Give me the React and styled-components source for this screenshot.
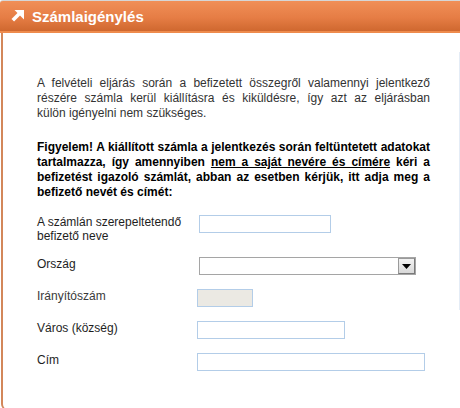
import React from "react";
import styled, { createGlobalStyle } from "styled-components";

const GlobalStyle = createGlobalStyle`
  body {
    margin: 0;
    background: #fff;
    font-family: "Liberation Sans", Arial, sans-serif;
  }
`;

const Page = styled.div`
  position: relative;
  width: 460px;
  height: 408px;
  overflow: hidden;
  background: #fff;
`;

const Header = styled.div`
  height: 30px;
  border-top: 1px solid #d6d6d6;
  border-bottom: 2px solid #ee8b4d;
  background: linear-gradient(to bottom, #f08f57 0%, #e67d45 55%, #cf682f 100%);
  border-top-left-radius: 3px;
  display: flex;
  align-items: center;
  padding-left: 11px;
  gap: 8px;
`;

const Title = styled.div`
  color: #fff;
  font-weight: bold;
  font-size: 15px;
  line-height: 30px;
  padding-top: 1px;
`;

const Panel = styled.div`
  box-sizing: border-box;
  height: 377px;
  margin-left: 1px;
  border-left: 2px solid #d3875a;
  border-bottom: 1px solid #d3875a;
  border-bottom-left-radius: 6px;
  padding: 43px 0 0 34px;
`;

const Column = styled.div`
  width: 393px;
`;

const Text = styled.div`
  margin: 0 0 ${({ $gap }) => $gap}px;
  font-size: 12px;
  line-height: 15px;
  color: ${({ $strong }) => ($strong ? "#000" : "#333")};
  font-weight: ${({ $strong }) => ($strong ? "bold" : "normal")};
`;

const Line = styled.span`
  display: block;
  height: 15px;
  white-space: nowrap;
  text-align: ${({ $last }) => ($last ? "left" : "justify")};
  text-align-last: ${({ $last }) => ($last ? "left" : "justify")};
`;

const Under = styled.span`
  text-decoration: underline;
`;

const Form = styled.div`
  display: flex;
  flex-direction: column;
  gap: 14px;
`;

const Row = styled.div`
  display: flex;
  align-items: flex-start;
`;

const Label = styled.div`
  width: 160px;
  flex: none;
  font-size: 12px;
  line-height: 14px;
  color: ${({ $muted }) => ($muted ? "#3a3a3a" : "#1e1e1e")};
`;

const Input = styled.div`
  box-sizing: border-box;
  width: ${({ $w }) => $w}px;
  height: 18px;
  margin-left: ${({ $shift }) => $shift || 0}px;
  border: 1px solid #b3cde8;
  background: ${({ $disabled }) => ($disabled ? "#ebe9e3" : "#fff")};
`;

const Select = styled.div`
  box-sizing: border-box;
  width: 217px;
  height: 18px;
  margin-left: 2px;
  border: 1px solid #a5a5a5;
  background: #fff;
  display: flex;
  justify-content: flex-end;
`;

const DropButton = styled.div`
  box-sizing: border-box;
  width: 17px;
  height: 16px;
  border: 1px solid #7a7a7a;
  border-top-color: #9a9a9a;
  border-left-color: #9a9a9a;
  background: linear-gradient(to bottom, #f2f2f2, #d8d8d8);
  display: flex;
  align-items: center;
  justify-content: center;
  padding-top: 2px;
`;

const EdgeLine = styled.div`
  position: absolute;
  left: 459px;
  top: 52px;
  width: 1px;
  height: 258px;
  background: #e4ecf6;
`;

function ArrowIcon() {
  return (
    <svg width="13" height="12" viewBox="0 0 13 12">
      <polygon points="3.5,0 13,0 13,9.5" fill="#fff" />
      <line x1="1.8" y1="10.2" x2="9" y2="3" stroke="#fff" strokeWidth="3.6" />
    </svg>
  );
}

function Caret() {
  return (
    <svg width="9" height="6" viewBox="0 0 9 6">
      <polygon points="0,0 9,0 4.5,5" fill="#000" />
    </svg>
  );
}

export default function App() {
  return (
    <Page>
      <GlobalStyle />
      <Header>
        <ArrowIcon />
        <Title>Számlaigénylés</Title>
      </Header>
      <Panel>
        <Column>
          <Text $gap={19}>
            <Line>A felvételi eljárás során a befizetett összegről valamennyi jelentkező</Line>
            <Line>részére számla kerül kiállításra és kiküldésre, így azt az eljárásban</Line>
            <Line $last>külön igényelni nem szükséges.</Line>
          </Text>
          <Text $strong $gap={15}>
            <Line>Figyelem! A kiállított számla a jelentkezés során feltüntetett adatokat</Line>
            <Line>
              tartalmazza, így amennyiben <Under>nem a saját nevére és címére</Under> kéri a
            </Line>
            <Line>befizetést igazoló számlát, abban az esetben kérjük, itt adja meg a</Line>
            <Line $last>befizető nevét és címét:</Line>
          </Text>
        </Column>
        <Form>
          <Row>
            <Label>
              A számlán szerepeltetendő
              <br />
              befizető neve
            </Label>
            <Input $w={132} $shift={2} />
          </Row>
          <Row>
            <Label>Ország</Label>
            <Select>
              <DropButton>
                <Caret />
              </DropButton>
            </Select>
          </Row>
          <Row>
            <Label $muted>Irányítószám</Label>
            <Input $w={56} $disabled />
          </Row>
          <Row>
            <Label>Város (község)</Label>
            <Input $w={148} />
          </Row>
          <Row>
            <Label>Cím</Label>
            <Input $w={228} />
          </Row>
        </Form>
      </Panel>
      <EdgeLine />
    </Page>
  );
}
